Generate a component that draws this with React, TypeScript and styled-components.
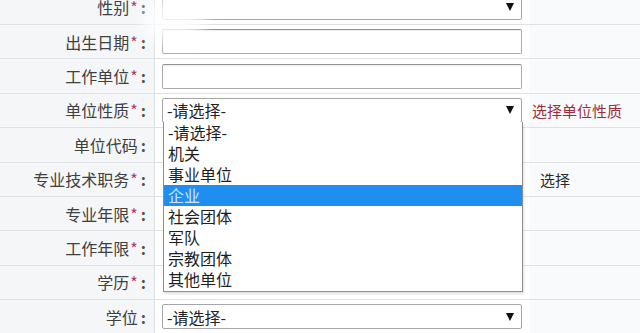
import React, { FC } from "react";
import styled, { createGlobalStyle } from "styled-components";

const GlobalStyle = createGlobalStyle`
  html, body {
    margin: 0;
    padding: 0;
    background: #ffffff;
    overflow: hidden;
  }
  body {
    font-family: "Noto Sans CJK SC", "Noto Sans", sans-serif;
    width: 640px;
    height: 333px;
  }
`;

const Page = styled.div`
  position: relative;
  width: 640px;
  height: 333px;
  overflow: hidden;
`;

const Table = styled.div`
  margin-top: -9.4px;
  display: flex;
  flex-direction: column;
`;

const Row = styled.div`
  display: grid;
  grid-template-columns: 155px 375px 1fr;
  height: 34.4px;
  box-sizing: border-box;
  border-bottom: 1px solid #dde0e4;
`;

const LabelCell = styled.div`
  display: flex;
  align-items: center;
  justify-content: flex-end;
  padding-right: 8px;
  background: #f5f6f8;
  border-right: 1px solid #dcdfe3;
  font-size: 16px;
  color: #404040;
  white-space: nowrap;
`;

const Star = styled.span`
  color: #b03a66;
  font-size: 16px;
  margin-left: 1px;
`;

const Colon = styled.span`
  margin-left: 3px;
  font-weight: 700;
  color: #505050;
`;

const FieldCell = styled.div`
  display: flex;
  align-items: center;
  padding-left: 7px;
  background: #ffffff;
`;

const NoteCell = styled.div<{ $tone?: "warn" | "plain" }>`
  display: flex;
  align-items: center;
  padding-left: ${(p) => (p.$tone === "warn" ? "2px" : "10px")};
  background: #f9fafb;
  font-size: 15px;
  color: ${(p) => (p.$tone === "warn" ? "#9c2d3c" : "#2a2a2a")};
`;

const TextBox = styled.div`
  width: 360px;
  height: 25px;
  box-sizing: border-box;
  border: 1px solid #a9abad;
  border-top-color: #8f9193;
  border-radius: 2px;
  background: #fff;
  box-shadow: inset 0 1px 1px rgba(0, 0, 0, 0.08);
`;

const SelectBox = styled.div`
  width: 360px;
  height: 25px;
  box-sizing: border-box;
  border: 1px solid #a4a6a8;
  border-radius: 2px;
  background: #fff;
  display: flex;
  align-items: center;
  justify-content: space-between;
  padding: 0 6px 0 4px;
  font-size: 16px;
  color: #222;
`;

const Arrow = styled.span`
  width: 0;
  height: 0;
  border-left: 4px solid transparent;
  border-right: 4px solid transparent;
  border-top: 8px solid #111;
  margin-right: 1px;
`;

const ListBox = styled.div`
  position: absolute;
  left: 163px;
  top: 122px;
  width: 360px;
  box-sizing: border-box;
  border: 1px solid #8c8e90;
  border-top: none;
  background: #fff;
  box-shadow: 1px 2px 2px rgba(0, 0, 0, 0.12);
  padding-bottom: 1px;
`;

const Option = styled.div<{ $active?: boolean }>`
  height: 21px;
  line-height: 21px;
  padding-left: 4px;
  font-size: 16px;
  color: ${(p) => (p.$active ? "#cfe6ff" : "#1e1e1e")};
  background: ${(p) => (p.$active ? "#1e8ef0" : "transparent")};
`;

const Smudge = styled.div`
  position: absolute;
  left: 142px;
  top: -4px;
  width: 64px;
  height: 48px;
  border-radius: 50%;
  background: rgba(255, 255, 255, 0.8);
  filter: blur(8px);
`;

type Field = {
  label: string;
  required?: boolean;
  kind: "select" | "text" | "none";
  value?: string;
  note?: string;
  noteTone?: "warn" | "plain";
};

const fields: Field[] = [
  { label: "性别", required: true, kind: "select", value: "" },
  { label: "出生日期", required: true, kind: "text" },
  { label: "工作单位", required: true, kind: "text" },
  { label: "单位性质", required: true, kind: "select", value: "-请选择-", note: "选择单位性质", noteTone: "warn" },
  { label: "单位代码", kind: "none" },
  { label: "专业技术职务", required: true, kind: "none", note: "选择", noteTone: "plain" },
  { label: "专业年限", required: true, kind: "none" },
  { label: "工作年限", required: true, kind: "none" },
  { label: "学历", required: true, kind: "none" },
  { label: "学位", kind: "select", value: "-请选择-" },
];

const options = ["-请选择-", "机关", "事业单位", "企业", "社会团体", "军队", "宗教团体", "其他单位"];

const App: FC = () => {
  return (
    <Page>
      <GlobalStyle />
      <Table>
        {fields.map((f) => (
          <Row key={f.label}>
            <LabelCell>
              {f.label}
              {f.required && <Star>*</Star>}
              <Colon>:</Colon>
            </LabelCell>
            <FieldCell>
              {f.kind === "text" && <TextBox />}
              {f.kind === "select" && (
                <SelectBox>
                  <span>{f.value}</span>
                  <Arrow />
                </SelectBox>
              )}
            </FieldCell>
            <NoteCell $tone={f.noteTone}>{f.note}</NoteCell>
          </Row>
        ))}
      </Table>
      <ListBox>
        {options.map((o) => (
          <Option key={o} $active={o === "企业"}>
            {o}
          </Option>
        ))}
      </ListBox>
      <Smudge />
    </Page>
  );
};

export default App;
